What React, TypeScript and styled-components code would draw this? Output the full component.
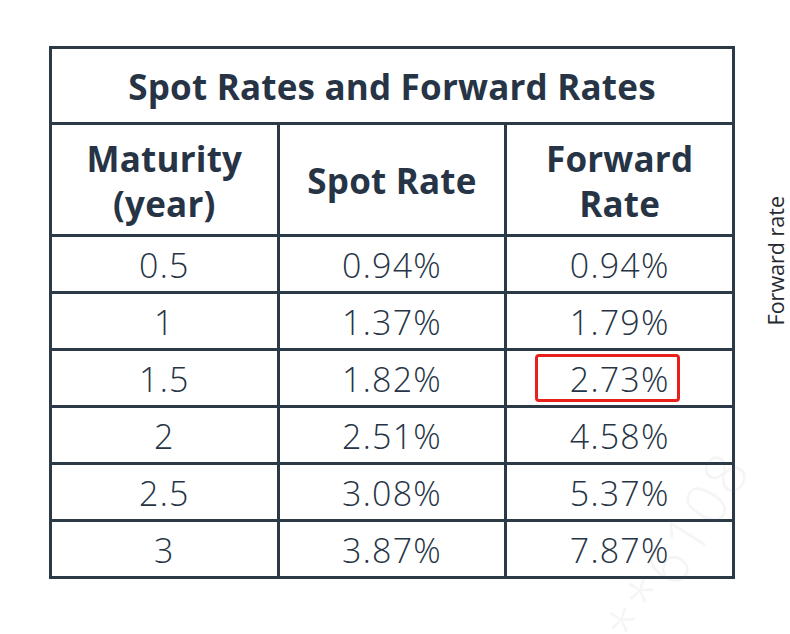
import React from "react";
import styled, { createGlobalStyle } from "styled-components";

const GlobalStyle = createGlobalStyle`
  html, body { margin: 0; padding: 0; background: #ffffff; }
  body { width: 790px; height: 634px; overflow: hidden; }
`;

const Page = styled.div`
  position: relative;
  width: 790px;
  height: 634px;
  box-sizing: border-box;
  padding: 46px 0 0 49px;
  display: flex;
  align-items: flex-start;
  font-family: "Open Sans", "Noto Sans", sans-serif;
  color: #263445;
  overflow: hidden;
`;

const Table = styled.div`
  position: relative;
  z-index: 1;
  width: 686px;
  flex-shrink: 0;
  box-sizing: border-box;
  display: grid;
  grid-template-columns: 1fr 1fr 1fr;
  grid-template-rows: 73px 109px repeat(6, 54px);
  gap: 3px;
  padding: 3px;
  background: #2c3947;
`;

const Cell = styled.div<{ $span?: number; $bold?: boolean }>`
  position: relative;
  background: #ffffff;
  grid-column: span ${(p) => p.$span ?? 1};
  display: flex;
  align-items: center;
  justify-content: center;
  text-align: center;
  font-size: ${(p) => (p.$bold ? "35px" : "34px")};
  font-weight: ${(p) => (p.$bold ? 700 : 300)};
  line-height: 45px;
  letter-spacing: ${(p) => (p.$bold ? "0.2px" : "1.2px")};
  padding-top: ${(p) => (p.$bold ? "2px" : "3px")};
`;

const Highlight = styled.div`
  position: absolute;
  left: 28px;
  top: 3px;
  width: 145px;
  height: 48px;
  box-sizing: border-box;
  border: 3px solid #e8201c;
  border-radius: 4px;
  pointer-events: none;
`;

const Side = styled.div`
  flex-shrink: 0;
  margin-left: 30px;
  padding-top: 150px;
`;

const SideLabel = styled.div`
  writing-mode: vertical-rl;
  transform: rotate(180deg);
  font-family: "Open Sans", "Noto Sans", sans-serif;
  font-size: 21.5px;
  line-height: 22px;
  color: #262b31;
  white-space: nowrap;
`;

const Watermark = styled.div`
  position: absolute;
  z-index: 2;
  left: 602px;
  top: 628px;
  transform: rotate(-58deg);
  transform-origin: left center;
  font-family: "Open Sans", sans-serif;
  font-weight: 300;
  font-size: 58px;
  letter-spacing: 3px;
  color: rgba(110, 120, 130, 0.07);
  white-space: nowrap;
  pointer-events: none;
`;

const rows: [string, string, string][] = [
  ["0.5", "0.94%", "0.94%"],
  ["1", "1.37%", "1.79%"],
  ["1.5", "1.82%", "2.73%"],
  ["2", "2.51%", "4.58%"],
  ["2.5", "3.08%", "5.37%"],
  ["3", "3.87%", "7.87%"],
];

export default function App() {
  return (
    <>
      <GlobalStyle />
      <Page>
        <Table>
          <Cell $span={3} $bold>
            Spot Rates and Forward Rates
          </Cell>
          <Cell $bold>
            Maturity
            <br />
            (year)
          </Cell>
          <Cell $bold>Spot Rate</Cell>
          <Cell $bold>
            Forward
            <br />
            Rate
          </Cell>
          {rows.map(([m, s, f], i) => (
            <React.Fragment key={m}>
              <Cell>{m}</Cell>
              <Cell>{s}</Cell>
              <Cell>
                {i === 2 && <Highlight />}
                {f}
              </Cell>
            </React.Fragment>
          ))}
        </Table>
        <Side>
          <SideLabel>Forward rate</SideLabel>
        </Side>
        <Watermark>***6108</Watermark>
      </Page>
    </>
  );
}
